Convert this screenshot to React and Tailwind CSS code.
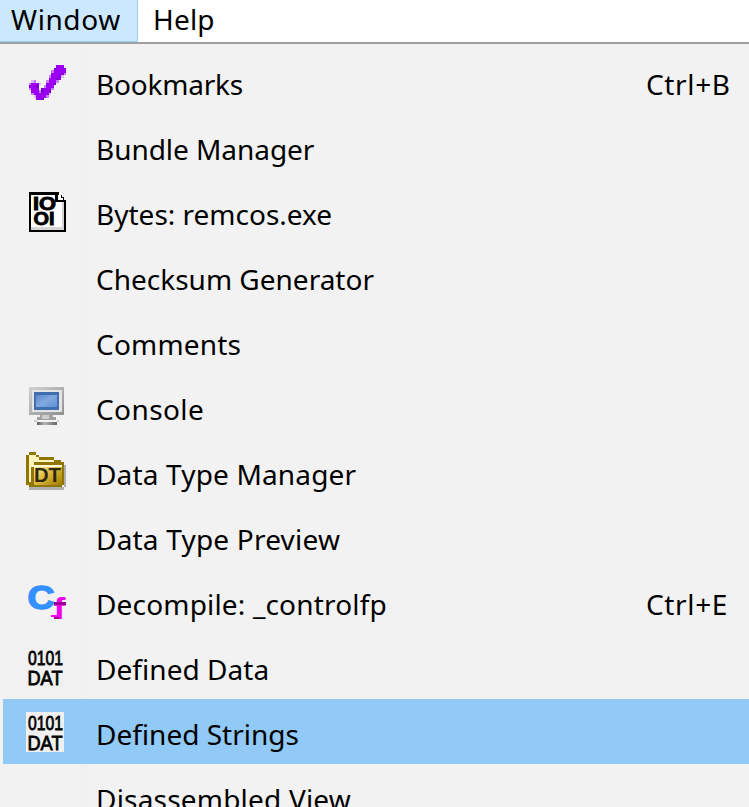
const PALETTE = { p: '#9b00f5', d: '#8200d2', l: '#c77dff', w: '#dcb9f8' };

// Each string is one row of the bookmark tick; every character is a pixel.
const TICK = [
  '...........ppp.',
  '..........dpppp',
  '.........lppppp',
  '.........ppppdl',
  '........lpppdw.',
  '........pppdp..',
  '.wl....lpppl...',
  'lpppw..pppd....',
  'pppd..lppp.....',
  'lppp.dpppl.....',
  '.pppldppd......',
  '.lppppppw......',
  '..wppppl.......',
  '...ppd.........',
];

function Canvas({ children }) {
  return (
    <svg width="42" height="42" viewBox="0 0 42 42" shapeRendering="crispEdges" className="block shrink-0 overflow-visible">
      {children}
    </svg>
  );
}

function BookmarkIcon() {
  return (
    <Canvas>
      {TICK.flatMap((row, y) =>
        [...row].map((c, x) =>
          c === '.' ? null : (
            <rect key={x + '-' + y} x={3.5 + x * 2.5} y={3 + y * 2.5} width="2.5" height="2.5" fill={PALETTE[c]} />
          ),
        ),
      )}
    </Canvas>
  );
}

function BytesIcon() {
  return (
    <Canvas>
      <path d="M4 0h30v2.500h2.500V5H39v2.500h2V40H4z" fill="#000" />
      <path d="M6 3h24v7h8.500v27.500H6z" fill="#fff" />
      <path d="M33 3v5h5V5.500h-2.500V3z" fill="#fff" />
      <path d="M36.500 10h2v27.500H6V34.500h30.500z" fill="#d4d4d4" />
      <g fontFamily="Liberation Sans" fontWeight="700" fontSize="18" fill="#000" stroke="#000" strokeWidth=".9">
        <text x="8" y="17.500" textLength="23" lengthAdjust="spacingAndGlyphs">IO</text>
        <text x="8.500" y="33" textLength="21" lengthAdjust="spacingAndGlyphs">OI</text>
      </g>
    </Canvas>
  );
}

function ConsoleIcon() {
  return (
    <Canvas>
      <defs>
        <linearGradient id="bezel" x1="0" y1="0" x2="1" y2="1">
          <stop offset="0" stopColor="#d2d2d2" />
          <stop offset="1" stopColor="#909090" />
        </linearGradient>
        <linearGradient id="screen" x1="0" y1="0" x2="1" y2="1">
          <stop offset="0" stopColor="#5987cc" />
          <stop offset=".5" stopColor="#82a9df" />
          <stop offset="1" stopColor="#5f91d7" />
        </linearGradient>
        <linearGradient id="foot" x1="0" y1="0" x2="1" y2="0">
          <stop offset="0" stopColor="#555" />
          <stop offset=".4" stopColor="#b5b5b5" />
          <stop offset="1" stopColor="#6a6a6a" />
        </linearGradient>
      </defs>
      <rect x="4" y="0" width="35" height="27.500" fill="url(#bezel)" />
      <rect x="6.500" y="2.500" width="30" height="22.500" fill="#e4e4e4" />
      <rect x="8.500" y="5" width="25.500" height="17.500" fill="#416ead" />
      <rect x="11" y="7.500" width="20.500" height="12.500" fill="url(#screen)" />
      <rect x="15" y="27.500" width="13" height="2.500" fill="#a5a5a5" />
      <rect x="12" y="30" width="19" height="2.500" fill="#a0a0a0" />
      <rect x="17" y="28" width="7" height="3.500" fill="#cecece" />
      <rect x="9" y="32.500" width="25" height="2.500" fill="#cfcfcf" />
      <rect x="11.500" y="32.500" width="20" height="2.500" fill="#f4f4f4" />
      <rect x="11.500" y="35" width="20" height="2.500" fill="url(#foot)" />
    </Canvas>
  );
}

function DataTypeIcon() {
  return (
    <Canvas>
      <defs>
        <linearGradient id="folder" x1="0" y1="0" x2="1" y2="1">
          <stop offset="0" stopColor="#fdf3b0" />
          <stop offset=".5" stopColor="#ddb83b" />
          <stop offset="1" stopColor="#a17d00" />
        </linearGradient>
      </defs>
      <path d="M3.500 35H39V12.500h2V35h-2v2.500H3.500z" fill="#b0b0b0" />
      <path d="M1 2.500h2.500V0H11v2.500h2.500V5h15v2.500H36V10h3v22.500h-2.500V35H3.500v-2.500H1z" fill="#907500" />
      <path d="M3.500 2.500H11V5h2.500v2.500h15V10h-20v5H6v15H3.500z" fill="#fff2bd" />
      <rect x="8.500" y="12.500" width="28" height="20" fill="url(#folder)" />
      <rect x="8.500" y="12.500" width="28" height="2.500" fill="#fff7d9" />
      <text x="9" y="29.500" fontFamily="Liberation Sans" fontWeight="700" fontSize="19.500" textLength="27" lengthAdjust="spacingAndGlyphs" fill="#2d2712">DT</text>
    </Canvas>
  );
}

function DecompileIcon() {
  return (
    <Canvas>
      <text x="2.500" y="26.500" fontFamily="Liberation Sans" fontWeight="700" fontSize="34" textLength="27" lengthAdjust="spacingAndGlyphs" fill="#3590ff" stroke="#3590ff" strokeWidth="1.500">C</text>
      <text x="28.500" y="36.500" fontFamily="Liberation Sans" fontWeight="700" fontSize="30" textLength="12" lengthAdjust="spacingAndGlyphs" fill="#f000ee">f</text>
      <rect x="29" y="20" width="12" height="2.500" fill="#9b0096" />
      <rect x="26" y="32.500" width="8" height="2.500" fill="#ff00ff" />
      <rect x="28.500" y="34.500" width="5" height="2.500" fill="#9b0096" />
    </Canvas>
  );
}

function DataIcon() {
  return (
    <Canvas>
      <rect x="1" y="0" width="38" height="40" fill="#f0f0f0" />
      <g fontFamily="Liberation Sans" fontWeight="400" fill="#000" stroke="#000" strokeWidth=".8">
        <text x="3" y="18" fontSize="21" textLength="35" lengthAdjust="spacingAndGlyphs">0101</text>
        <text x="2.500" y="38" fontSize="21" textLength="35" lengthAdjust="spacingAndGlyphs">DAT</text>
      </g>
    </Canvas>
  );
}

const ITEMS = [
  { label: 'Bookmarks', icon: BookmarkIcon, keys: 'Ctrl+B', spacing: 'tracking-[-0.2px]' },
  { label: 'Bundle Manager', spacing: 'tracking-[-0.05px]' },
  { label: 'Bytes: remcos.exe', icon: BytesIcon },
  { label: 'Checksum Generator' },
  { label: 'Comments', spacing: 'tracking-[0.2px]' },
  { label: 'Console', icon: ConsoleIcon, spacing: 'tracking-[0.4px]' },
  { label: 'Data Type Manager', icon: DataTypeIcon, spacing: 'tracking-[0.16px]' },
  { label: 'Data Type Preview', spacing: 'tracking-[0.2px]' },
  { label: 'Decompile: _controlfp', icon: DecompileIcon, keys: 'Ctrl+E', spacing: 'tracking-[0.17px]' },
  { label: 'Defined Data', icon: DataIcon, spacing: 'tracking-[0.05px]' },
  { label: 'Defined Strings', icon: DataIcon, active: true },
  { label: 'Disassembled View', spacing: 'tracking-[0.2px]' },
];

function MenuItem({ label, icon: Icon, keys, active, spacing = 'tracking-normal' }) {
  return (
    <li className={active ? 'ml-[3px] flex h-[65px] shrink-0 bg-[#91c9f7]' : 'ml-[3px] flex h-[65px] shrink-0'}>
      <div className="w-[78px] shrink-0 pt-[13px] pl-[22px]">{Icon && <Icon />}</div>
      <div className={active ? 'w-[7px]' : 'w-[7px] bg-[#f0f0f0]'} />
      <span className={'ml-[8px] flex-1 pt-[14px] leading-[42px] whitespace-nowrap ' + spacing}>{label}</span>
      {keys && <span className="w-[103px] pt-[14px] leading-[42px] tracking-[0.65px] whitespace-nowrap">{keys}</span>}
    </li>
  );
}

export default function App() {
  return (
    <div className="flex h-[807px] w-[749px] flex-col overflow-hidden bg-[#f2f2f2] font-['Noto_Sans','Open_Sans',sans-serif] text-[28px] text-black">
      <nav className="flex h-[44px] shrink-0 border-b-2 border-[#a0a0a0] bg-white leading-[38px]">
        <div className="w-[138px] border-r border-b border-[#99d1ff] bg-[#cce8ff] pl-[11px] tracking-[0.6px]">Window</div>
        <div className="pl-[15px] tracking-[0.2px]">Help</div>
      </nav>
      <ul className="flex flex-col pt-[5px]">
        {ITEMS.map((item) => (
          <MenuItem key={item.label} {...item} />
        ))}
      </ul>
    </div>
  );
}
